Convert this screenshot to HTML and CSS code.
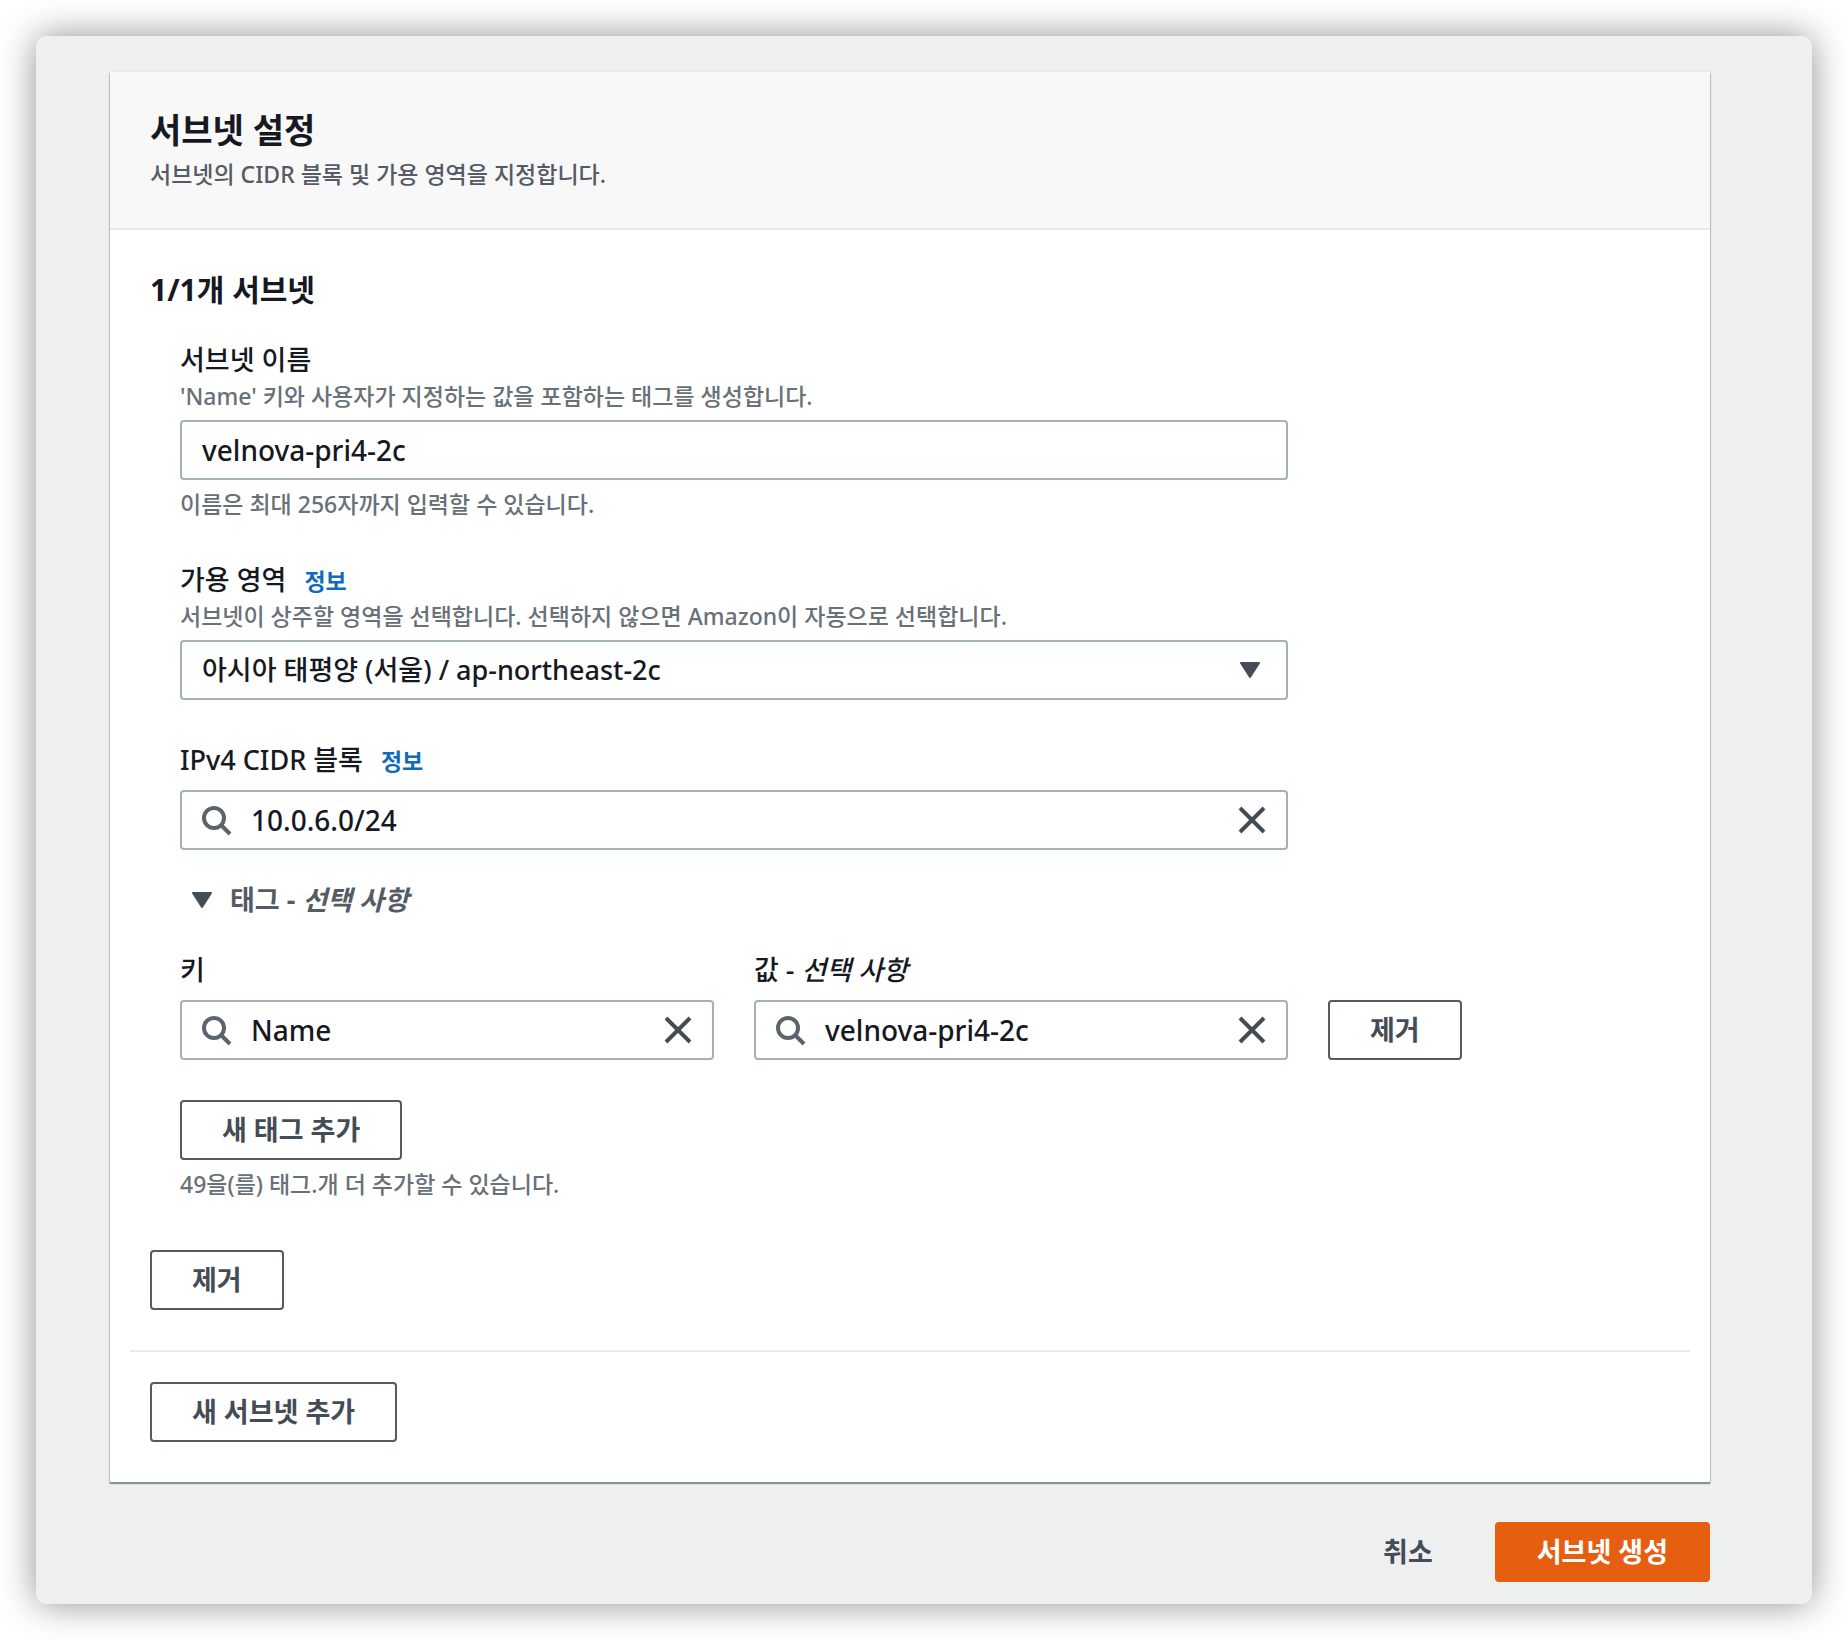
FILE: index.html
```
<!DOCTYPE html>
<html lang="ko">
<head>
    <meta charset="UTF-8">
    <meta name="viewport" content="width=device-width, initial-scale=1.0">
    <title>서브넷 생성</title>
    <link rel="stylesheet" href="styles.css">
</head>
<body>

    <!-- Shared icons -->
    <svg class="sprite" aria-hidden="true">
        <symbol id="icon-search" viewBox="0 0 32 32">
            <circle cx="13" cy="13" r="10" fill="none" stroke="currentColor" stroke-width="4"/>
            <path d="M20 20 L29 29" fill="none" stroke="currentColor" stroke-width="4"/>
        </symbol>
        <symbol id="icon-close" viewBox="0 0 32 32">
            <path d="M4 4 L28 28 M28 4 L4 28" fill="none" stroke="currentColor" stroke-width="4"/>
        </symbol>
        <symbol id="icon-caret" viewBox="0 0 20 16">
            <path d="M1 1 H19 L10 15 Z" fill="currentColor" stroke="currentColor" stroke-width="2" stroke-linejoin="round"/>
        </symbol>
    </svg>

    <main class="window">
        <form>
            <section class="card">
                <header class="card-header">
                    <h1>서브넷 설정</h1>
                    <p>서브넷의 CIDR 블록 및 가용 영역을 지정합니다.</p>
                </header>

                <div class="card-body">
                    <h2>1/1개 서브넷</h2>

                    <div class="subnet">
                        <div class="field">
                            <label for="subnet-name">서브넷 이름</label>
                            <p class="description">'Name' 키와 사용자가 지정하는 값을 포함하는 태그를 생성합니다.</p>
                            <input class="control" type="text" id="subnet-name" value="velnova-pri4-2c">
                            <p class="hint">이름은 최대 256자까지 입력할 수 있습니다.</p>
                        </div>

                        <div class="field">
                            <div class="label-row">
                                <label for="zone">가용 영역</label>
                                <a href="#">정보</a>
                            </div>
                            <p class="description">서브넷이 상주할 영역을 선택합니다. 선택하지 않으면 Amazon이 자동으로 선택합니다.</p>
                            <div class="control-wrap">
                                <select class="control" id="zone">
                                    <option>아시아 태평양 (서울) / ap-northeast-2c</option>
                                </select>
                                <svg class="icon-caret select-caret"><use href="#icon-caret"/></svg>
                            </div>
                        </div>

                        <div class="field">
                            <div class="label-row spaced">
                                <label for="cidr">IPv4 CIDR 블록</label>
                                <a href="#">정보</a>
                            </div>
                            <div class="control-wrap">
                                <svg class="icon-search"><use href="#icon-search"/></svg>
                                <input class="control search" type="text" id="cidr" value="10.0.6.0/24">
                                <button class="clear" type="button" aria-label="지우기"><svg><use href="#icon-close"/></svg></button>
                            </div>
                        </div>

                        <button class="expander" type="button" aria-expanded="true">
                            <svg class="icon-caret"><use href="#icon-caret"/></svg>
                            <span>태그 - <i>선택 사항</i></span>
                        </button>

                        <div class="tag-row">
                            <div>
                                <div class="label-row spaced"><label for="tag-key">키</label></div>
                                <div class="control-wrap">
                                    <svg class="icon-search"><use href="#icon-search"/></svg>
                                    <input class="control search" type="text" id="tag-key" value="Name">
                                    <button class="clear" type="button" aria-label="지우기"><svg><use href="#icon-close"/></svg></button>
                                </div>
                            </div>
                            <div>
                                <div class="label-row spaced"><label for="tag-value">값 - <i>선택 사항</i></label></div>
                                <div class="control-wrap">
                                    <svg class="icon-search"><use href="#icon-search"/></svg>
                                    <input class="control search" type="text" id="tag-value" value="velnova-pri4-2c">
                                    <button class="clear" type="button" aria-label="지우기"><svg><use href="#icon-close"/></svg></button>
                                </div>
                            </div>
                            <button class="btn" type="button">제거</button>
                        </div>

                        <button class="btn" type="button">새 태그 추가</button>
                        <p class="hint">49을(를) 태그.개 더 추가할 수 있습니다.</p>
                    </div>

                    <button class="btn" type="button">제거</button>
                    <hr>
                    <button class="btn" type="button">새 서브넷 추가</button>
                </div>
            </section>

            <div class="actions">
                <button class="btn btn-link" type="button">취소</button>
                <button class="btn btn-primary" type="submit">서브넷 생성</button>
            </div>
        </form>
    </main>

</body>
</html>
```
FILE: styles.css
```
* {
    box-sizing: border-box;
}

body {
    margin: 0;
    padding: 36px;
    background-color: #fff;
    color: #16191f;
    font-family: "Noto Sans", "Noto Sans CJK KR", sans-serif;
    font-size: 27px;
    font-weight: 500;
    line-height: 40px;
}

h1, h2, p {
    margin: 0;
}

input, select, button {
    font: inherit;
    color: inherit;
}

.sprite {
    position: absolute;
    width: 0;
    height: 0;
}

/* Floating window with soft shadow */
.window {
    padding: 36px 102px 22px 74px;
    background-color: #eef0f0;
    border-radius: 10px;
    box-shadow: 0 0 36px rgba(0, 0, 0, 0.44);
}

/* Card */
.card {
    background-color: #fff;
    box-shadow: 0 2px 1px #879596, 1px 1px 1px #c5cacc, -1px 1px 1px #c5cacc, 0 -2px 0 #e6eaea;
}

.card-header {
    padding: 34px 40px 38px;
    background-color: #f8f8f8;
    border-bottom: 2px solid #e6eaea;
}

.card-header h1 {
    margin-bottom: 4px;
    font-size: 34px;
    font-weight: 700;
    line-height: 48px;
}

.card-header p {
    color: #545b64;
    font-size: 23px;
    line-height: 32px;
}

.card-body {
    padding: 40px;
}

.card-body h2 {
    margin-bottom: 30px;
    font-size: 30px;
    font-weight: 700;
    line-height: 40px;
}

.card-body hr {
    height: 2px;
    margin: 40px -20px 30px;
    border: 0;
    background-color: #e6eaea;
}

/* Form fields */
.subnet {
    margin-bottom: 50px;
    padding-left: 30px;
}

.field {
    max-width: 1108px;
    margin-bottom: 40px;
}

.field label {
    display: block;
}

.label-row {
    display: flex;
    align-items: baseline;
    gap: 18px;
    height: 40px;
}

.label-row.spaced {
    margin-bottom: 10px;
}

.label-row a {
    color: #0f6cbd;
    font-size: 23px;
    font-weight: 700;
    text-decoration: none;
}

.description,
.hint {
    color: #687078;
    font-size: 23px;
    line-height: 32px;
}

.description {
    margin-bottom: 8px;
}

.hint {
    margin-top: 8px;
}

.control-wrap {
    position: relative;
}

.control {
    display: block;
    width: 100%;
    height: 60px;
    padding: 0 60px 0 20px;
    background-color: #fff;
    border: 2px solid #a3b3b4;
    border-radius: 4px;
    font-size: 28px;
    appearance: none;
}

select.control {
    font-size: 27px;
}

.control.search {
    padding-left: 69px;
}

/* Icons lying over the controls */
.icon-caret {
    width: 20px;
    height: 16px;
    color: #444c55;
}

.select-caret {
    position: absolute;
    top: 22px;
    right: 28px;
    pointer-events: none;
}

.icon-search {
    position: absolute;
    top: 15px;
    left: 21px;
    width: 32px;
    height: 32px;
    color: #5b646d;
}

.clear {
    position: absolute;
    top: 14px;
    right: 20px;
    width: 32px;
    height: 32px;
    padding: 0;
    background: none;
    border: 0;
    color: #444c55;
    cursor: pointer;
}

.clear svg {
    display: block;
    width: 32px;
    height: 32px;
}

/* Tags */
.expander {
    display: flex;
    align-items: center;
    gap: 18px;
    margin: -10px 0 30px;
    padding: 0 12px;
    background: none;
    border: 0;
    color: #545b64;
    font-weight: 700;
    cursor: pointer;
}

.tag-row {
    display: grid;
    grid-template-columns: minmax(0, 534px) minmax(0, 534px) auto;
    justify-content: start;
    align-items: end;
    gap: 40px;
    margin-bottom: 40px;
}

/* Buttons */
.btn {
    display: block;
    height: 60px;
    padding: 0 40px;
    background-color: #fff;
    border: 2px solid #545b64;
    border-radius: 4px;
    color: #444c55;
    font-weight: 700;
    line-height: 40px;
    cursor: pointer;
}

.btn-link {
    background: none;
    border-color: transparent;
}

.btn-primary {
    background-color: #e65f11;
    border-color: #e65f11;
    color: #fff;
}

.actions {
    display: flex;
    justify-content: flex-end;
    gap: 20px;
    padding-top: 40px;
}
```
